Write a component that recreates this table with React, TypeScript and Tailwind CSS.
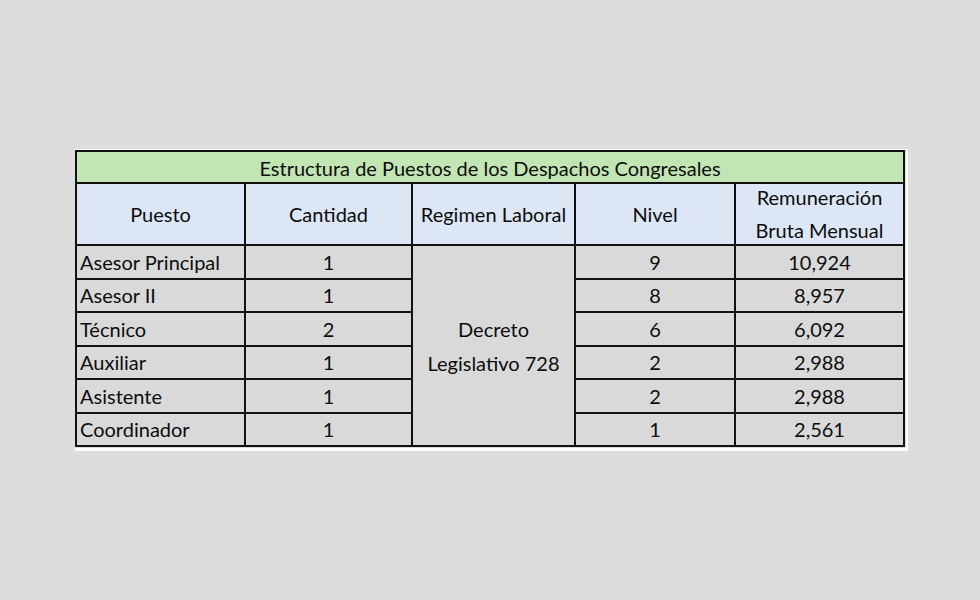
const ROWS = [
  { puesto: "Asesor Principal", cantidad: "1", nivel: "9", remuneracion: "10,924" },
  { puesto: "Asesor II", cantidad: "1", nivel: "8", remuneracion: "8,957" },
  { puesto: "Técnico", cantidad: "2", nivel: "6", remuneracion: "6,092" },
  { puesto: "Auxiliar", cantidad: "1", nivel: "2", remuneracion: "2,988" },
  { puesto: "Asistente", cantidad: "1", nivel: "2", remuneracion: "2,988" },
  { puesto: "Coordinador", cantidad: "1", nivel: "1", remuneracion: "2,561" },
];

const cell = "border-2 border-[#111] bg-[#d9d9d9] h-[33.5px] p-0 leading-none";
const head = "border-2 border-[#111] bg-[#dce6f4] font-normal text-center p-0";

export default function App() {
  return (
    <div className="w-[980px] h-[600px] bg-[#dddddd] flex pl-[75px] pt-[149px] font-['Lato','Liberation_Sans',sans-serif] text-[#0d0d0d] text-[20px]">
      <div className="border-t border-r-2 border-b-[3px] border-white h-fit pr-px pb-px">
        <table className="table-fixed border-collapse w-[828px]">
          <colgroup>
            <col className="w-[169px]" />
            <col className="w-[167px]" />
            <col className="w-[163px]" />
            <col className="w-[160px]" />
            <col className="w-[169px]" />
          </colgroup>
          <thead>
            <tr>
              <th colSpan={5} className="border-2 border-[#111] bg-[#c2e5b4] font-normal text-center h-[32px] p-0 leading-none">
                <span className="relative top-px">Estructura de Puestos de los Despachos Congresales</span>
              </th>
            </tr>
            <tr className="h-[62px]">
              <th className={head}>Puesto</th>
              <th className={head}>Cantidad</th>
              <th className={head}>Regimen Laboral</th>
              <th className={head}>Nivel</th>
              <th className={head}>
                <div className="h-[58px] flex flex-col justify-center items-center leading-[33px]">
                  <span>Remuneración</span>
                  <span>Bruta Mensual</span>
                </div>
              </th>
            </tr>
          </thead>
          <tbody>
            {ROWS.map((r, i) => (
              <tr key={r.puesto}>
                <td className={cell + " text-left pl-[3px]"}>{r.puesto}</td>
                <td className={cell + " text-center"}>{r.cantidad}</td>
                {i === 0 && (
                  <td rowSpan={6} className="border-2 border-[#111] bg-[#d9d9d9] text-center align-middle leading-[34px] p-0">
                    Decreto
                    <br />
                    Legislativo 728
                  </td>
                )}
                <td className={cell + " text-center"}>{r.nivel}</td>
                <td className={cell + " text-center"}>{r.remuneracion}</td>
              </tr>
            ))}
          </tbody>
        </table>
      </div>
    </div>
  );
}
